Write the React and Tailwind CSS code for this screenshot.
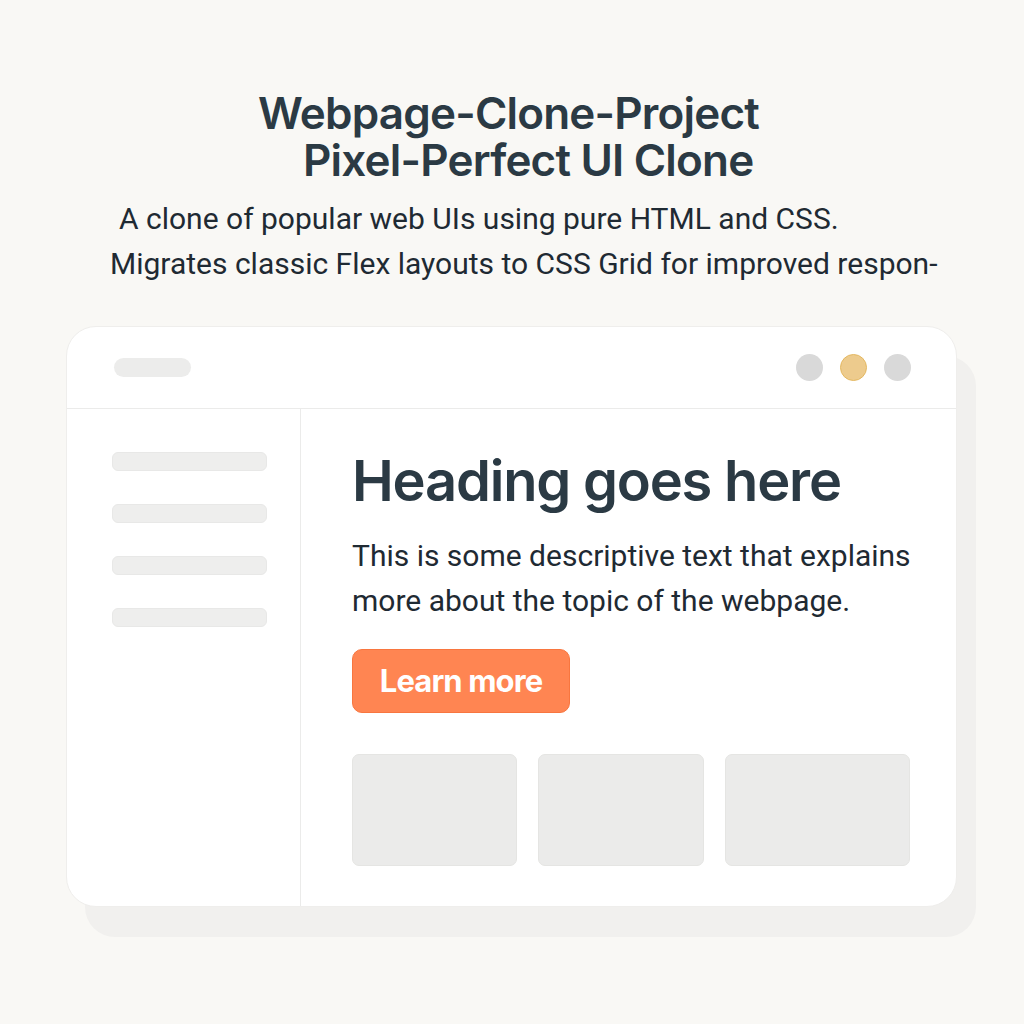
export default function App() {
    const navItems = [0, 1, 2, 3];
    const tiles = ["w-[165px]", "w-[166px]", "w-[185px]"];

    return (
        <div className="w-[1024px] h-[1024px] bg-[#f9f8f5] overflow-hidden font-['Roboto',sans-serif] text-[#1f2a33]">
            {/* page intro */}
            <h1 className="pt-[90px] pl-[258px] font-['Inter',sans-serif] font-semibold text-[44px] leading-[47px] tracking-[-0.8px] text-[#2b3a44]">
                Webpage-Clone-Project<br />
                <span className="pl-[45px]">Pixel-Perfect UI Clone</span>
            </h1>
            <p className="mt-[12px] pl-[110px] text-[30px] leading-[45px] text-[#1f2a33] whitespace-nowrap">
                <span className="pl-[9px]">A clone of popular web UIs using pure HTML and CSS.</span><br />
                Migrates classic Flex layouts to CSS Grid for improved respon-
            </p>

            {/* browser mock */}
            <div className="ml-[66px] mt-[40px] w-[891px] h-[581px] bg-white rounded-[30px] border border-[#efeeec] shadow-[19px_30px_0_0_#f1f0ee] flex flex-col">
                <div className="h-[82px] shrink-0 border-b border-[#ebebea] flex items-center justify-between pl-[47px] pr-[45px]">
                    <div className="w-[77px] h-[19px] rounded-full bg-[#ececeb]" />
                    <div className="flex gap-[17px]">
                        <div className="w-[27px] h-[27px] rounded-full bg-[#d9d9d9]" />
                        <div className="w-[27px] h-[27px] rounded-full bg-[#edcb8d] border border-[#e4b861]" />
                        <div className="w-[27px] h-[27px] rounded-full bg-[#d9d9d9]" />
                    </div>
                </div>

                <div className="flex flex-1">
                    <div className="w-[234px] shrink-0 border-r border-[#ebebea] pt-[43px] pl-[45px] flex flex-col gap-[33px]">
                        {navItems.map((i) => (
                            <div key={i} className="w-[155px] h-[19px] rounded-[6px] bg-[#eeeeed] border border-[#e8e8e7]" />
                        ))}
                    </div>

                    <div className="flex-1 pl-[51px] pt-[40px]">
                        <h2 className="font-['Inter',sans-serif] font-semibold text-[56px] leading-[64px] tracking-[-1.2px] text-[#2b3a44]">
                            Heading goes here
                        </h2>
                        <p className="mt-[20px] text-[30px] leading-[45px] text-[#1f2a33] whitespace-nowrap">
                            This is some descriptive text that explains<br />
                            more about the topic of the webpage.
                        </p>
                        <button className="mt-[26px] w-[218px] h-[64px] rounded-[10px] bg-[#ff8552] border border-[#f8763f] text-white font-['Inter',sans-serif] font-bold text-[31px] tracking-[-0.9px]">
                            Learn more
                        </button>
                        <div className="mt-[41px] flex gap-[21px]">
                            {tiles.map((w, i) => (
                                <div key={i} className={`${w} h-[112px] rounded-[7px] bg-[#ebebea] border border-[#e5e5e3]`} />
                            ))}
                        </div>
                    </div>
                </div>
            </div>
        </div>
    );
}
